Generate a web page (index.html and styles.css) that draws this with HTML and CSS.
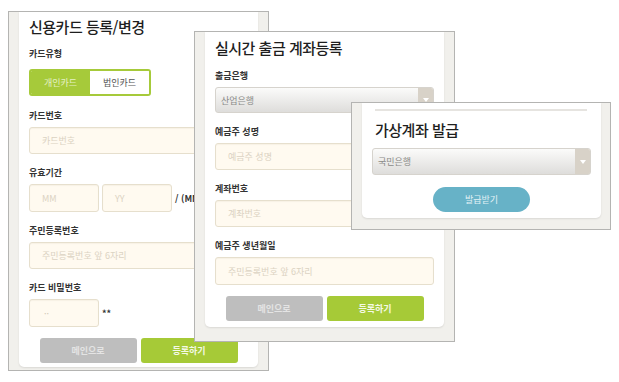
FILE: index.html
```html
<!DOCTYPE html>
<html lang="ko">
<head>
<meta charset="utf-8">
<title>결제수단 등록</title>
<link rel="stylesheet" href="styles.css">
</head>
<body>
<div class="desk">

  <section class="win win1">
    <div class="card card1">
      <h1 class="title">신용카드 등록/변경</h1>
      <div class="label first seg-label">카드유형</div>
      <div class="seg">
        <span class="seg-btn seg-on">개인카드</span>
        <span class="seg-btn seg-off">법인카드</span>
      </div>
      <div class="label after-seg">카드번호</div>
      <div class="input full">카드번호</div>
      <div class="label">유효기간</div>
      <div class="row">
        <div class="input short">MM</div>
        <div class="input short">YY</div>
        <span class="note">/ (MM/YY)</span>
      </div>
      <div class="label">주민등록번호</div>
      <div class="input full">주민등록번호 앞 6자리</div>
      <div class="label">카드 비밀번호</div>
      <div class="row">
        <div class="input short dots">··</div>
        <span class="note stars">**</span>
      </div>
      <div class="actions">
        <button class="btn btn-gray">메인으로</button>
        <button class="btn btn-green">등록하기</button>
      </div>
    </div>
  </section>

  <section class="win win2">
    <div class="card card2">
      <h1 class="title">실시간 출금 계좌등록</h1>
      <div class="label first">출금은행</div>
      <div class="select"><span class="select-text">산업은행</span><span class="select-arrow"><i class="tri"></i></span></div>
      <div class="label">예금주 성명</div>
      <div class="input full">예금주 성명</div>
      <div class="label">계좌번호</div>
      <div class="input full">계좌번호</div>
      <div class="label">예금주 생년월일</div>
      <div class="input full tall">주민등록번호 앞 6자리</div>
      <div class="actions">
        <button class="btn btn-gray">메인으로</button>
        <button class="btn btn-green">등록하기</button>
      </div>
    </div>
  </section>

  <section class="win win3">
    <div class="card card3">
      <hr class="rule">
      <h1 class="title title3">가상계좌 발급</h1>
      <div class="select select3"><span class="select-text">국민은행</span><span class="select-arrow"><i class="tri"></i></span></div>
      <div class="actions actions3">
        <button class="btn btn-pill">발급받기</button>
      </div>
    </div>
  </section>

</div>
</body>
</html>
```

FILE: styles.css
```css
* { box-sizing: border-box; }

html, body {
  margin: 0;
  padding: 0;
  background: #ffffff;
}

body {
  font-family: "Noto Sans CJK KR", "Noto Sans", sans-serif;
  color: #333;
}

.desk {
  position: relative;
  width: 619px;
  height: 382px;
  overflow: hidden;
}

.win {
  position: absolute;
  background: #f1f0ec;
  border: 1px solid #b4b4b2;
  overflow: hidden;
}

.win1 { left: 8px; top: 11px; width: 261px; height: 360px; padding: 0 10px 3px 10px; z-index: 1; }
.win2 { left: 194px; top: 31px; width: 261px; height: 311px; padding: 0 10px 14px 10px; z-index: 2; }
.win3 { left: 351px; top: 102px; width: 260px; height: 128px; padding: 0 9px 11px 10px; z-index: 3; }

.card {
  background: #ffffff;
  height: 100%;
  border-radius: 0 0 5px 5px;
  box-shadow: 0 1px 2px rgba(0, 0, 0, 0.1);
  padding: 0 10px;
  display: flex;
  flex-direction: column;
}

.card1 { padding-top: 5px; }
.card2 { padding-top: 6px; }
.card3 { padding-top: 6px; }

.title {
  margin: 0;
  font-size: 15px;
  line-height: 20px;
  font-weight: 500;
  letter-spacing: -0.5px;
  color: #1e1e1e;
  white-space: nowrap;
}

.label {
  font-size: 9px;
  line-height: 14px;
  font-weight: bold;
  color: #333;
  margin: 12px 0 4px;
  white-space: nowrap;
}
.label.first { margin-top: 10px; }
.card2 .label.first { margin-top: 11px; }
.label.seg-label { margin-bottom: 8px; }
.label.after-seg { margin-top: 13px; }

.seg {
  display: flex;
  width: 122px;
  height: 27px;
  border: 2px solid #a6ca3a;
  border-radius: 3px;
  overflow: hidden;
}
.seg-btn {
  flex: 1;
  display: flex;
  align-items: center;
  justify-content: center;
  font-size: 9px;
}
.seg-on { background: #a6ca3a; color: #e4f0c4; }
.seg-off { background: #fff; color: #555; }

.input {
  height: 27px;
  background: #fffaf0;
  border: 1px solid #e6dfcd;
  border-radius: 3px;
  box-shadow: inset 0 1px 1px rgba(120, 100, 60, 0.06);
  padding-left: 12px;
  display: flex;
  align-items: center;
  font-size: 9px;
  color: #dbd2c2;
  white-space: nowrap;
  flex-shrink: 0;
}
.input.full { width: 100%; }
.input.short { width: 70px; }
.input.tall { height: 28px; }
.input.dots { padding-left: 14px; color: #cfc6b6; }

.row {
  display: flex;
  align-items: center;
  gap: 3px;
}
.row .input.short { height: 28px; }
.note {
  font-size: 9px;
  font-weight: bold;
  color: #333;
  white-space: nowrap;
}

.actions {
  margin-top: 11px;
  display: flex;
  justify-content: center;
  gap: 4px;
}

.btn {
  width: 97px;
  height: 25px;
  border: 0;
  border-radius: 3px;
  font-family: inherit;
  font-size: 9px;
  font-weight: bold;
  padding: 0;
}
.btn-gray { background: #bebebe; color: #e4e4e4; }
.btn-green { background: #a6ca37; color: #f4f9e6; }

.select {
  height: 26px;
  width: 100%;
  display: flex;
  border: 1px solid #d6d3cd;
  border-radius: 3px;
  background: linear-gradient(#fbfbfa, #dedddb);
  overflow: hidden;
  flex-shrink: 0;
}
.select-text {
  flex: 1;
  display: flex;
  align-items: center;
  padding-left: 5px;
  font-size: 9px;
  color: #8a8a88;
}
.select-arrow {
  width: 15px;
  background: #d8d2c8;
  display: flex;
  align-items: center;
  justify-content: center;
}
.tri {
  display: block;
  width: 0;
  height: 0;
  border-left: 3px solid transparent;
  border-right: 3px solid transparent;
  border-top: 4px solid #ffffff;
}

.rule {
  margin: 0 4px 0 3px;
  border: 0;
  height: 2px;
  background: #e6e4e0;
}
.title3 { margin-top: 9px; margin-left: 3px; }
.select3 { margin-top: 8px; height: 27px; }
.actions3 { margin-top: 12px; }
.btn-pill {
  background: #67b2c7;
  color: #e2f1f5;
  border-radius: 13px;
  font-weight: normal;
}
```
